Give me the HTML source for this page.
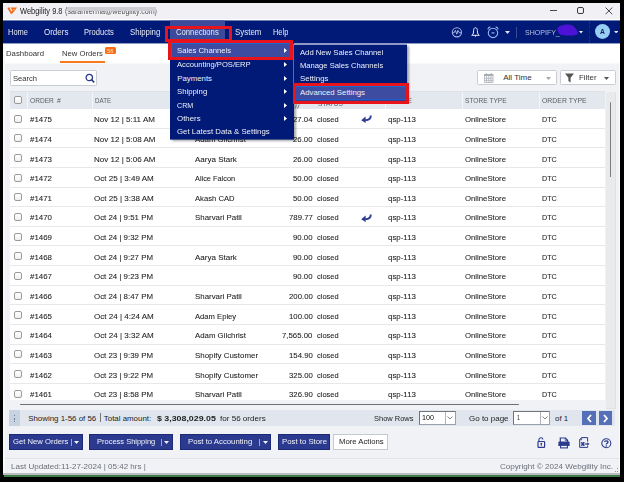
<!DOCTYPE html><html><head><meta charset="utf-8"><style>
*{margin:0;padding:0;box-sizing:border-box}
html,body{width:624px;height:482px;overflow:hidden;background:#000}
body{position:relative;font-family:"Liberation Sans",sans-serif}
div,span,svg{position:absolute}
span{white-space:nowrap;transform-origin:0 50%}
.r{-webkit-text-stroke:0.08px #333}
</style></head><body>
<div style="left:3px;top:3px;width:617px;height:470px;background:#f1f2f5"></div>
<div style="left:3px;top:3px;width:2px;height:470px;background:#f8f8f8"></div>
<div style="left:3px;top:3px;width:617px;height:16px;background:#f0f0f5"></div>
<div style="left:3px;top:19px;width:617px;height:1px;background:#ffffff"></div>
<svg style="left:6.5px;top:6.5px" width="11" height="8" viewBox="0 0 11 8"><path d="M0.3 0.9 L2.1 0.3 L4.9 5.2 L4.1 7.2 Z" fill="#f56a12"/><path d="M4.1 0.4 L10.1 0.4 L4.8 7.2 L3.9 5.3 L5.6 3.2 L3.2 0.4 Z" fill="#f56a12"/><circle cx="6.8" cy="2.6" r="0.7" fill="#f9c9a4"/></svg>
<span style="left:20.00px;top:1.07px;font-size:9px;line-height:20px;color:#1a1a1a;transform:scaleX(0.8277);">Webgility 9.8</span>
<span style="left:65.00px;top:1.07px;font-size:9px;line-height:20px;color:#555;transform:scaleX(0.7930);filter:blur(0.35px);">(sarahverma@webgility.com)</span>
<div style="left:67px;top:6.5px;width:89px;height:4.800000000000001px;background:#cdced3;filter:blur(0.5px)"></div>
<div style="left:549.5px;top:10px;width:7.0px;height:1px;background:#4a4a4a"></div>
<div style="left:577px;top:7px;width:7px;height:7px;border:1px solid #3a3a3a;border-radius:2px"></div>
<svg style="left:605px;top:7px" width="8" height="8" viewBox="0 0 8 8"><path d="M0.6 0.6L7.2 7.2M7.2 0.6L0.6 7.2" stroke="#333" stroke-width="0.9"/></svg>
<div style="left:3px;top:21px;width:617px;height:22px;background:#011a77"></div>
<div style="left:3px;top:20px;width:617px;height:1px;background:rgba(1,26,119,0.55)"></div>
<div style="left:3px;top:43px;width:617px;height:1px;background:rgba(1,26,119,0.4)"></div>
<div style="left:170px;top:21px;width:55px;height:22px;background:#3b4a9b"></div>
<div style="left:170px;top:20px;width:55px;height:1px;background:rgba(59,74,155,0.55)"></div>
<span style="left:7.70px;top:22.94px;font-size:8.2px;line-height:20px;color:#e8ebf5;transform:scaleX(0.9135);">Home</span>
<span style="left:43.60px;top:22.94px;font-size:8.2px;line-height:20px;color:#e8ebf5;transform:scaleX(0.9740);">Orders</span>
<span style="left:83.80px;top:22.94px;font-size:8.2px;line-height:20px;color:#e8ebf5;transform:scaleX(0.9212);">Products</span>
<span style="left:129.50px;top:22.94px;font-size:8.2px;line-height:20px;color:#e8ebf5;transform:scaleX(0.9499);">Shipping</span>
<span style="left:176.20px;top:22.94px;font-size:8.2px;line-height:20px;color:#e8ebf5;transform:scaleX(0.9388);">Connections</span>
<span style="left:234.80px;top:22.94px;font-size:8.2px;line-height:20px;color:#e8ebf5;transform:scaleX(0.9690);">System</span>
<span style="left:272.90px;top:22.94px;font-size:8.2px;line-height:20px;color:#e8ebf5;transform:scaleX(0.9080);">Help</span>
<svg style="left:451px;top:27px" width="12" height="11" viewBox="0 0 12 11"><circle cx="5.9" cy="5.3" r="4.6" fill="none" stroke="#aab4e2" stroke-width="1.1"/><path d="M1.6 5.8 L3 5.8 L4.4 3.4 L5.8 7.2 L6.9 3.4 L8.4 5.8 L10.2 5.8" fill="none" stroke="#aab4e2" stroke-width="1"/></svg>
<svg style="left:470.6px;top:27.4px" width="9" height="10" viewBox="0 0 9 10"><path d="M4.5 0.7 C3.2 0.7 2.7 2 2.6 3.5 L2.4 6 C2.3 7 1.6 7.7 0.7 8.3 L8.3 8.3 C7.4 7.7 6.7 7 6.6 6 L6.4 3.5 C6.3 2 5.8 0.7 4.5 0.7 Z" fill="none" stroke="#e9ecf7" stroke-width="1"/><circle cx="4.5" cy="9" r="0.7" fill="#e9ecf7"/></svg>
<svg style="left:487.4px;top:26.3px" width="12" height="13" viewBox="0 0 12 13"><circle cx="6" cy="6.9" r="4.7" fill="none" stroke="#8fb3ee" stroke-width="1.1"/><path d="M0.8 3.4 Q1.2 1.3 3.3 0.9 M11.2 3.4 Q10.8 1.3 8.7 0.9" fill="none" stroke="#8fb3ee" stroke-width="1.1"/><rect x="4.5" y="6.3" width="3" height="1.2" fill="#8fb3ee"/></svg>
<svg style="left:504.5px;top:31px" width="5" height="3" viewBox="0 0 5 3"><path d="M0 0 L5 0 L2.5 3 Z" fill="#dfe3f3"/></svg>
<div style="left:516px;top:27px;width:1px;height:11px;background:#3a4a96"></div>
<span style="left:525.10px;top:22.53px;font-size:7.8px;line-height:20px;color:#b8c0e0;transform:scaleX(0.9021);">SHOPIFY_</span>
<svg style="left:556px;top:24px" width="23" height="12" viewBox="0 0 23 12"><path d="M1.3 4.8 C2 2.5 4 1.8 6 1.6 C8 0.8 11 0.4 13.5 0.7 C16 0.8 18 2.2 18.8 3.8 C20.5 5.5 22 7.5 22 9.5 C21.5 11 18 11.6 14 11.6 C10 11.8 7 11.5 4.5 10.5 C2.5 9.5 1 7 1.3 4.8 Z" fill="#4d12d6"/></svg>
<svg style="left:579px;top:31px" width="4" height="2.5" viewBox="0 0 4 2.5"><path d="M0 0 L4 0 L2 2.5 Z" fill="#f2f4fb"/></svg>
<div style="left:589px;top:21px;width:1px;height:22px;border-left:1px dashed #2a2877"></div>
<div style="left:594.8px;top:24.3px;width:15.400000000000091px;height:15.2px;background:#98cdf4;border-radius:50%"></div>
<span style="left:600.10px;top:21.72px;font-size:7.6px;line-height:20px;color:#13205a;font-weight:bold;transform:scaleX(0.8955);">A</span>
<svg style="left:613.8px;top:30.6px" width="4.3" height="2.6" viewBox="0 0 5 3"><path d="M0 0 L5 0 L2.5 3 Z" fill="#dfe3f3"/></svg>
<div style="left:5px;top:44px;width:615px;height:19px;background:#ffffff"></div>
<div style="left:5px;top:63px;width:615px;height:1px;background:#f8f9fa"></div>
<span style="left:6.20px;top:44.44px;font-size:8px;line-height:20px;color:#333;transform:scaleX(0.9714);">Dashboard</span>
<span style="left:62.00px;top:44.44px;font-size:8px;line-height:20px;color:#333;transform:scaleX(0.9583);">New Orders</span>
<div style="left:60px;top:61px;width:45px;height:2px;background:#f77a1e"></div>
<div style="left:104.5px;top:46.8px;width:11.299999999999997px;height:7.200000000000003px;background:#fb6d12;border-radius:1.5px"></div>
<span style="left:107.30px;top:40.67px;font-size:5.6px;line-height:20px;color:#fde3d0;transform:scaleX(1.0135);">56</span>
<div style="left:10px;top:70.4px;width:86.5px;height:15.599999999999994px;background:#fff;border:1px solid #c9ccd2;border-radius:1.5px"></div>
<span style="left:12.50px;top:69.04px;font-size:8px;line-height:20px;color:#333;transform:scaleX(0.9464);">Search</span>
<svg style="left:85px;top:73px" width="10" height="11" viewBox="0 0 10 11"><circle cx="4.3" cy="4.5" r="3.2" fill="none" stroke="#273a8f" stroke-width="1.3"/><path d="M6.6 6.8 L9.2 9.4" stroke="#273a8f" stroke-width="1.6"/></svg>
<div style="left:477px;top:70px;width:80px;height:15px;background:#fff;border:1px solid #c9ccd2;border-radius:1.5px"></div>
<svg style="left:483.5px;top:73px" width="10" height="10" viewBox="0 0 10 10"><rect x="0" y="1" width="9.5" height="2" fill="#a9adb4"/><path d="M0.5 3V9.5H9V3M0.5 5.2H9M0.5 7.4H9M2.6 3V9.5M4.75 3V9.5M6.9 3V9.5" fill="none" stroke="#b3b7be" stroke-width="0.9"/><path d="M2.3 0V1.5M7.2 0V1.5" stroke="#a9adb4" stroke-width="1"/></svg>
<span style="left:503.20px;top:68.04px;font-size:8px;line-height:20px;color:#333;">All Time</span>
<svg style="left:545.5px;top:76.5px" width="5" height="3" viewBox="0 0 5 3"><path d="M0 0 L5 0 L2.5 3 Z" fill="#a8a8a8"/></svg>
<div style="left:560px;top:70px;width:56px;height:15px;background:#fff;border:1px solid #c9ccd2;border-radius:1.5px"></div>
<svg style="left:564.5px;top:72.5px" width="10" height="10" viewBox="0 0 10 10"><path d="M0 0.5 L9 0.5 L5.6 4.8 L5.6 9.5 L3.4 8 L3.4 4.8 Z" fill="#555"/></svg>
<span style="left:578.70px;top:68.04px;font-size:8px;line-height:20px;color:#333;transform:scaleX(0.9910);">Filter</span>
<svg style="left:604px;top:76.5px" width="5" height="3" viewBox="0 0 5 3"><path d="M0 0 L5 0 L2.5 3 Z" fill="#555"/></svg>
<div style="left:9.5px;top:91px;width:595.5px;height:18px;background:#e3e8ef;border-top:1px solid #dde2e9"></div>
<div style="left:27px;top:92px;width:1px;height:17px;background:#f4f6fa"></div>
<div style="left:92px;top:92px;width:1px;height:17px;background:#f4f6fa"></div>
<div style="left:385px;top:92px;width:1px;height:17px;background:#f4f6fa"></div>
<div style="left:462px;top:92px;width:1px;height:17px;background:#f4f6fa"></div>
<div style="left:539px;top:92px;width:1px;height:17px;background:#f4f6fa"></div>
<div style="left:14px;top:96px;width:8px;height:8px;background:linear-gradient(#fff,#f0f0f0);border:1px solid #9a9a9a;border-radius:2px"></div>
<span style="left:30.00px;top:90.70px;font-size:6.8px;line-height:20px;color:#555a66;transform:scaleX(0.9695);">ORDER</span>
<span style="left:57.00px;top:90.80px;font-size:6.8px;line-height:20px;color:#555a66;transform:scaleX(1.0069);">#</span>
<span style="left:94.90px;top:90.70px;font-size:6.8px;line-height:20px;color:#555a66;transform:scaleX(0.9124);">DATE</span>
<span style="left:195.00px;top:90.70px;font-size:6.8px;line-height:20px;color:#555a66;transform:scaleX(0.9538);">CUSTOMER</span>
<span style="left:283.00px;top:90.70px;font-size:6.8px;line-height:20px;color:#555a66;transform:scaleX(0.9838);">AMOUNT</span>
<span style="left:318.00px;top:93.70px;font-size:6.8px;line-height:20px;color:#555a66;transform:scaleX(0.9688);">STATUS</span>
<span style="left:389.00px;top:90.70px;font-size:6.8px;line-height:20px;color:#555a66;transform:scaleX(0.9875);">STORE</span>
<span style="left:465.30px;top:90.70px;font-size:6.8px;line-height:20px;color:#555a66;transform:scaleX(0.9734);">STORE TYPE</span>
<span style="left:542.30px;top:90.70px;font-size:6.8px;line-height:20px;color:#555a66;transform:scaleX(1.0137);">ORDER TYPE</span>
<div style="left:9.5px;top:109px;width:595.5px;height:290.5px;background:#fff"></div>
<div style="left:9.5px;top:127.64px;width:595.5px;height:0.9999999999999858px;background:#e6e8ec"></div>
<div style="left:14px;top:115px;width:8px;height:8px;background:linear-gradient(#fff,#f0f0f0);border:1px solid #9a9a9a;border-radius:2px"></div>
<span class=r style="left:30.00px;top:110.24px;font-size:8.1px;line-height:20px;color:#1a1a1a;transform:scaleX(0.9770);">#1475</span>
<span class=r style="left:94.10px;top:110.24px;font-size:8.1px;line-height:20px;color:#1a1a1a;transform:scaleX(0.9935);">Nov 12 | 5:11 AM</span>
<span class=r style="left:195.10px;top:110.24px;font-size:8.1px;line-height:20px;color:#1a1a1a;transform:scaleX(0.9668);">Adam Gilchrist</span>
<span class=r style="left:293.30px;top:110.24px;font-size:8.1px;line-height:20px;color:#1a1a1a;transform:scaleX(0.9610);">27.04</span>
<span class=r style="left:317.30px;top:110.24px;font-size:8.1px;line-height:20px;color:#1a1a1a;transform:scaleX(0.9227);">closed</span>
<svg style="left:360.5px;top:115.40px" width="11" height="8" viewBox="0 0 11 8"><path d="M9.8 0.6 C9.8 4 8 5.3 4.2 5.3" fill="none" stroke="#2a3c95" stroke-width="1.9"/><path d="M0.2 5.2 L4.6 1.6 L4.6 8 Z" fill="#2a3c95"/></svg>
<span class=r style="left:388.00px;top:110.24px;font-size:8.1px;line-height:20px;color:#1a1a1a;transform:scaleX(0.9765);">qsp-113</span>
<span class=r style="left:464.80px;top:110.24px;font-size:8.1px;line-height:20px;color:#1a1a1a;transform:scaleX(0.9587);">OnlineStore</span>
<span class=r style="left:541.90px;top:110.24px;font-size:8.1px;line-height:20px;color:#1a1a1a;transform:scaleX(0.8891);">DTC</span>
<div style="left:9.5px;top:147.28px;width:595.5px;height:1.0px;background:#e6e8ec"></div>
<div style="left:14px;top:134px;width:8px;height:8px;background:linear-gradient(#fff,#f0f0f0);border:1px solid #9a9a9a;border-radius:2px"></div>
<span class=r style="left:30.00px;top:129.88px;font-size:8.1px;line-height:20px;color:#1a1a1a;transform:scaleX(0.9770);">#1474</span>
<span class=r style="left:94.10px;top:129.88px;font-size:8.1px;line-height:20px;color:#1a1a1a;transform:scaleX(0.9935);">Nov 12 | 5:08 AM</span>
<span class=r style="left:195.10px;top:129.88px;font-size:8.1px;line-height:20px;color:#1a1a1a;transform:scaleX(0.9668);">Adam Gilchrist</span>
<span class=r style="left:293.30px;top:129.88px;font-size:8.1px;line-height:20px;color:#1a1a1a;transform:scaleX(0.9610);">26.00</span>
<span class=r style="left:317.30px;top:129.88px;font-size:8.1px;line-height:20px;color:#1a1a1a;transform:scaleX(0.9227);">closed</span>
<span class=r style="left:388.00px;top:129.88px;font-size:8.1px;line-height:20px;color:#1a1a1a;transform:scaleX(0.9765);">qsp-113</span>
<span class=r style="left:464.80px;top:129.88px;font-size:8.1px;line-height:20px;color:#1a1a1a;transform:scaleX(0.9587);">OnlineStore</span>
<span class=r style="left:541.90px;top:129.88px;font-size:8.1px;line-height:20px;color:#1a1a1a;transform:scaleX(0.8891);">DTC</span>
<div style="left:9.5px;top:166.92px;width:595.5px;height:1.0px;background:#e6e8ec"></div>
<div style="left:14px;top:154px;width:8px;height:8px;background:linear-gradient(#fff,#f0f0f0);border:1px solid #9a9a9a;border-radius:2px"></div>
<span class=r style="left:30.00px;top:149.52px;font-size:8.1px;line-height:20px;color:#1a1a1a;transform:scaleX(0.9770);">#1473</span>
<span class=r style="left:94.10px;top:149.52px;font-size:8.1px;line-height:20px;color:#1a1a1a;transform:scaleX(0.9935);">Nov 12 | 5:06 AM</span>
<span class=r style="left:195.10px;top:149.52px;font-size:8.1px;line-height:20px;color:#1a1a1a;transform:scaleX(0.9891);">Aarya Stark</span>
<span class=r style="left:293.30px;top:149.52px;font-size:8.1px;line-height:20px;color:#1a1a1a;transform:scaleX(0.9610);">26.00</span>
<span class=r style="left:317.30px;top:149.52px;font-size:8.1px;line-height:20px;color:#1a1a1a;transform:scaleX(0.9227);">closed</span>
<span class=r style="left:388.00px;top:149.52px;font-size:8.1px;line-height:20px;color:#1a1a1a;transform:scaleX(0.9765);">qsp-113</span>
<span class=r style="left:464.80px;top:149.52px;font-size:8.1px;line-height:20px;color:#1a1a1a;transform:scaleX(0.9587);">OnlineStore</span>
<span class=r style="left:541.90px;top:149.52px;font-size:8.1px;line-height:20px;color:#1a1a1a;transform:scaleX(0.8891);">DTC</span>
<div style="left:9.5px;top:186.56px;width:595.5px;height:1.0px;background:#e6e8ec"></div>
<div style="left:14px;top:174px;width:8px;height:8px;background:linear-gradient(#fff,#f0f0f0);border:1px solid #9a9a9a;border-radius:2px"></div>
<span class=r style="left:30.00px;top:169.16px;font-size:8.1px;line-height:20px;color:#1a1a1a;transform:scaleX(0.9770);">#1472</span>
<span class=r style="left:94.10px;top:169.16px;font-size:8.1px;line-height:20px;color:#1a1a1a;transform:scaleX(0.9935);">Oct 25 | 3:49 AM</span>
<span class=r style="left:195.10px;top:169.16px;font-size:8.1px;line-height:20px;color:#1a1a1a;transform:scaleX(0.9092);">Alice Falcon</span>
<span class=r style="left:293.30px;top:169.16px;font-size:8.1px;line-height:20px;color:#1a1a1a;transform:scaleX(0.9610);">50.00</span>
<span class=r style="left:317.30px;top:169.16px;font-size:8.1px;line-height:20px;color:#1a1a1a;transform:scaleX(0.9227);">closed</span>
<span class=r style="left:388.00px;top:169.16px;font-size:8.1px;line-height:20px;color:#1a1a1a;transform:scaleX(0.9765);">qsp-113</span>
<span class=r style="left:464.80px;top:169.16px;font-size:8.1px;line-height:20px;color:#1a1a1a;transform:scaleX(0.9587);">OnlineStore</span>
<span class=r style="left:541.90px;top:169.16px;font-size:8.1px;line-height:20px;color:#1a1a1a;transform:scaleX(0.8891);">DTC</span>
<div style="left:9.5px;top:206.2px;width:595.5px;height:1.0px;background:#e6e8ec"></div>
<div style="left:14px;top:193px;width:8px;height:8px;background:linear-gradient(#fff,#f0f0f0);border:1px solid #9a9a9a;border-radius:2px"></div>
<span class=r style="left:30.00px;top:188.80px;font-size:8.1px;line-height:20px;color:#1a1a1a;transform:scaleX(0.9770);">#1471</span>
<span class=r style="left:94.10px;top:188.80px;font-size:8.1px;line-height:20px;color:#1a1a1a;transform:scaleX(0.9935);">Oct 25 | 3:38 AM</span>
<span class=r style="left:195.10px;top:188.80px;font-size:8.1px;line-height:20px;color:#1a1a1a;transform:scaleX(0.9456);">Akash CAD</span>
<span class=r style="left:293.30px;top:188.80px;font-size:8.1px;line-height:20px;color:#1a1a1a;transform:scaleX(0.9610);">50.00</span>
<span class=r style="left:317.30px;top:188.80px;font-size:8.1px;line-height:20px;color:#1a1a1a;transform:scaleX(0.9227);">closed</span>
<span class=r style="left:388.00px;top:188.80px;font-size:8.1px;line-height:20px;color:#1a1a1a;transform:scaleX(0.9765);">qsp-113</span>
<span class=r style="left:464.80px;top:188.80px;font-size:8.1px;line-height:20px;color:#1a1a1a;transform:scaleX(0.9587);">OnlineStore</span>
<span class=r style="left:541.90px;top:188.80px;font-size:8.1px;line-height:20px;color:#1a1a1a;transform:scaleX(0.8891);">DTC</span>
<div style="left:9.5px;top:225.84px;width:595.5px;height:1.0px;background:#e6e8ec"></div>
<div style="left:14px;top:213px;width:8px;height:8px;background:linear-gradient(#fff,#f0f0f0);border:1px solid #9a9a9a;border-radius:2px"></div>
<span class=r style="left:30.00px;top:208.44px;font-size:8.1px;line-height:20px;color:#1a1a1a;transform:scaleX(0.9770);">#1470</span>
<span class=r style="left:94.10px;top:208.44px;font-size:8.1px;line-height:20px;color:#1a1a1a;transform:scaleX(0.9731);">Oct 24 | 9:51 PM</span>
<span class=r style="left:195.10px;top:208.44px;font-size:8.1px;line-height:20px;color:#1a1a1a;transform:scaleX(0.9739);">Sharvari Patil</span>
<span class=r style="left:288.98px;top:208.44px;font-size:8.1px;line-height:20px;color:#1a1a1a;transform:scaleX(0.9610);">789.77</span>
<span class=r style="left:317.30px;top:208.44px;font-size:8.1px;line-height:20px;color:#1a1a1a;transform:scaleX(0.9227);">closed</span>
<svg style="left:360.5px;top:213.60px" width="11" height="8" viewBox="0 0 11 8"><path d="M9.8 0.6 C9.8 4 8 5.3 4.2 5.3" fill="none" stroke="#2a3c95" stroke-width="1.9"/><path d="M0.2 5.2 L4.6 1.6 L4.6 8 Z" fill="#2a3c95"/></svg>
<span class=r style="left:388.00px;top:208.44px;font-size:8.1px;line-height:20px;color:#1a1a1a;transform:scaleX(0.9765);">qsp-113</span>
<span class=r style="left:464.80px;top:208.44px;font-size:8.1px;line-height:20px;color:#1a1a1a;transform:scaleX(0.9587);">OnlineStore</span>
<span class=r style="left:541.90px;top:208.44px;font-size:8.1px;line-height:20px;color:#1a1a1a;transform:scaleX(0.8891);">DTC</span>
<div style="left:9.5px;top:245.48px;width:595.5px;height:1.0px;background:#e6e8ec"></div>
<div style="left:14px;top:233px;width:8px;height:8px;background:linear-gradient(#fff,#f0f0f0);border:1px solid #9a9a9a;border-radius:2px"></div>
<span class=r style="left:30.00px;top:228.08px;font-size:8.1px;line-height:20px;color:#1a1a1a;transform:scaleX(0.9770);">#1469</span>
<span class=r style="left:94.10px;top:228.08px;font-size:8.1px;line-height:20px;color:#1a1a1a;transform:scaleX(0.9731);">Oct 24 | 9:32 PM</span>
<span class=r style="left:293.30px;top:228.08px;font-size:8.1px;line-height:20px;color:#1a1a1a;transform:scaleX(0.9610);">90.00</span>
<span class=r style="left:317.30px;top:228.08px;font-size:8.1px;line-height:20px;color:#1a1a1a;transform:scaleX(0.9227);">closed</span>
<span class=r style="left:388.00px;top:228.08px;font-size:8.1px;line-height:20px;color:#1a1a1a;transform:scaleX(0.9765);">qsp-113</span>
<span class=r style="left:464.80px;top:228.08px;font-size:8.1px;line-height:20px;color:#1a1a1a;transform:scaleX(0.9587);">OnlineStore</span>
<span class=r style="left:541.90px;top:228.08px;font-size:8.1px;line-height:20px;color:#1a1a1a;transform:scaleX(0.8891);">DTC</span>
<div style="left:9.5px;top:265.12px;width:595.5px;height:1.0px;background:#e6e8ec"></div>
<div style="left:14px;top:252px;width:8px;height:8px;background:linear-gradient(#fff,#f0f0f0);border:1px solid #9a9a9a;border-radius:2px"></div>
<span class=r style="left:30.00px;top:247.72px;font-size:8.1px;line-height:20px;color:#1a1a1a;transform:scaleX(0.9770);">#1468</span>
<span class=r style="left:94.10px;top:247.72px;font-size:8.1px;line-height:20px;color:#1a1a1a;transform:scaleX(0.9731);">Oct 24 | 9:27 PM</span>
<span class=r style="left:195.10px;top:247.72px;font-size:8.1px;line-height:20px;color:#1a1a1a;transform:scaleX(0.9891);">Aarya Stark</span>
<span class=r style="left:293.30px;top:247.72px;font-size:8.1px;line-height:20px;color:#1a1a1a;transform:scaleX(0.9610);">90.00</span>
<span class=r style="left:317.30px;top:247.72px;font-size:8.1px;line-height:20px;color:#1a1a1a;transform:scaleX(0.9227);">closed</span>
<span class=r style="left:388.00px;top:247.72px;font-size:8.1px;line-height:20px;color:#1a1a1a;transform:scaleX(0.9765);">qsp-113</span>
<span class=r style="left:464.80px;top:247.72px;font-size:8.1px;line-height:20px;color:#1a1a1a;transform:scaleX(0.9587);">OnlineStore</span>
<span class=r style="left:541.90px;top:247.72px;font-size:8.1px;line-height:20px;color:#1a1a1a;transform:scaleX(0.8891);">DTC</span>
<div style="left:9.5px;top:284.76px;width:595.5px;height:1.0px;background:#e6e8ec"></div>
<div style="left:14px;top:272px;width:8px;height:8px;background:linear-gradient(#fff,#f0f0f0);border:1px solid #9a9a9a;border-radius:2px"></div>
<span class=r style="left:30.00px;top:267.36px;font-size:8.1px;line-height:20px;color:#1a1a1a;transform:scaleX(0.9770);">#1467</span>
<span class=r style="left:94.10px;top:267.36px;font-size:8.1px;line-height:20px;color:#1a1a1a;transform:scaleX(0.9731);">Oct 24 | 9:23 PM</span>
<span class=r style="left:293.30px;top:267.36px;font-size:8.1px;line-height:20px;color:#1a1a1a;transform:scaleX(0.9610);">90.00</span>
<span class=r style="left:317.30px;top:267.36px;font-size:8.1px;line-height:20px;color:#1a1a1a;transform:scaleX(0.9227);">closed</span>
<span class=r style="left:388.00px;top:267.36px;font-size:8.1px;line-height:20px;color:#1a1a1a;transform:scaleX(0.9765);">qsp-113</span>
<span class=r style="left:464.80px;top:267.36px;font-size:8.1px;line-height:20px;color:#1a1a1a;transform:scaleX(0.9587);">OnlineStore</span>
<span class=r style="left:541.90px;top:267.36px;font-size:8.1px;line-height:20px;color:#1a1a1a;transform:scaleX(0.8891);">DTC</span>
<div style="left:9.5px;top:304.4px;width:595.5px;height:1.0px;background:#e6e8ec"></div>
<div style="left:14px;top:292px;width:8px;height:8px;background:linear-gradient(#fff,#f0f0f0);border:1px solid #9a9a9a;border-radius:2px"></div>
<span class=r style="left:30.00px;top:287.00px;font-size:8.1px;line-height:20px;color:#1a1a1a;transform:scaleX(0.9770);">#1466</span>
<span class=r style="left:94.10px;top:287.00px;font-size:8.1px;line-height:20px;color:#1a1a1a;transform:scaleX(0.9731);">Oct 24 | 8:47 PM</span>
<span class=r style="left:195.10px;top:287.00px;font-size:8.1px;line-height:20px;color:#1a1a1a;transform:scaleX(0.9739);">Sharvari Patil</span>
<span class=r style="left:288.98px;top:287.00px;font-size:8.1px;line-height:20px;color:#1a1a1a;transform:scaleX(0.9610);">200.00</span>
<span class=r style="left:317.30px;top:287.00px;font-size:8.1px;line-height:20px;color:#1a1a1a;transform:scaleX(0.9227);">closed</span>
<span class=r style="left:388.00px;top:287.00px;font-size:8.1px;line-height:20px;color:#1a1a1a;transform:scaleX(0.9765);">qsp-113</span>
<span class=r style="left:464.80px;top:287.00px;font-size:8.1px;line-height:20px;color:#1a1a1a;transform:scaleX(0.9587);">OnlineStore</span>
<span class=r style="left:541.90px;top:287.00px;font-size:8.1px;line-height:20px;color:#1a1a1a;transform:scaleX(0.8891);">DTC</span>
<div style="left:9.5px;top:324.04px;width:595.5px;height:1.0px;background:#e6e8ec"></div>
<div style="left:14px;top:311px;width:8px;height:8px;background:linear-gradient(#fff,#f0f0f0);border:1px solid #9a9a9a;border-radius:2px"></div>
<span class=r style="left:30.00px;top:306.64px;font-size:8.1px;line-height:20px;color:#1a1a1a;transform:scaleX(0.9770);">#1465</span>
<span class=r style="left:94.10px;top:306.64px;font-size:8.1px;line-height:20px;color:#1a1a1a;transform:scaleX(0.9935);">Oct 24 | 4:24 AM</span>
<span class=r style="left:195.10px;top:306.64px;font-size:8.1px;line-height:20px;color:#1a1a1a;transform:scaleX(0.9437);">Adam Epley</span>
<span class=r style="left:288.98px;top:306.64px;font-size:8.1px;line-height:20px;color:#1a1a1a;transform:scaleX(0.9610);">100.00</span>
<span class=r style="left:317.30px;top:306.64px;font-size:8.1px;line-height:20px;color:#1a1a1a;transform:scaleX(0.9227);">closed</span>
<span class=r style="left:388.00px;top:306.64px;font-size:8.1px;line-height:20px;color:#1a1a1a;transform:scaleX(0.9765);">qsp-113</span>
<span class=r style="left:464.80px;top:306.64px;font-size:8.1px;line-height:20px;color:#1a1a1a;transform:scaleX(0.9587);">OnlineStore</span>
<span class=r style="left:541.90px;top:306.64px;font-size:8.1px;line-height:20px;color:#1a1a1a;transform:scaleX(0.8891);">DTC</span>
<div style="left:9.5px;top:343.68px;width:595.5px;height:1.0px;background:#e6e8ec"></div>
<div style="left:14px;top:331px;width:8px;height:8px;background:linear-gradient(#fff,#f0f0f0);border:1px solid #9a9a9a;border-radius:2px"></div>
<span class=r style="left:30.00px;top:326.28px;font-size:8.1px;line-height:20px;color:#1a1a1a;transform:scaleX(0.9770);">#1464</span>
<span class=r style="left:94.10px;top:326.28px;font-size:8.1px;line-height:20px;color:#1a1a1a;transform:scaleX(0.9935);">Oct 24 | 3:32 AM</span>
<span class=r style="left:195.10px;top:326.28px;font-size:8.1px;line-height:20px;color:#1a1a1a;transform:scaleX(0.9668);">Adam Gilchrist</span>
<span class=r style="left:282.48px;top:326.28px;font-size:8.1px;line-height:20px;color:#1a1a1a;transform:scaleX(0.9610);">7,565.00</span>
<span class=r style="left:317.30px;top:326.28px;font-size:8.1px;line-height:20px;color:#1a1a1a;transform:scaleX(0.9227);">closed</span>
<span class=r style="left:388.00px;top:326.28px;font-size:8.1px;line-height:20px;color:#1a1a1a;transform:scaleX(0.9765);">qsp-113</span>
<span class=r style="left:464.80px;top:326.28px;font-size:8.1px;line-height:20px;color:#1a1a1a;transform:scaleX(0.9587);">OnlineStore</span>
<span class=r style="left:541.90px;top:326.28px;font-size:8.1px;line-height:20px;color:#1a1a1a;transform:scaleX(0.8891);">DTC</span>
<div style="left:9.5px;top:363.32px;width:595.5px;height:1.0px;background:#e6e8ec"></div>
<div style="left:14px;top:350px;width:8px;height:8px;background:linear-gradient(#fff,#f0f0f0);border:1px solid #9a9a9a;border-radius:2px"></div>
<span class=r style="left:30.00px;top:345.92px;font-size:8.1px;line-height:20px;color:#1a1a1a;transform:scaleX(0.9770);">#1463</span>
<span class=r style="left:94.10px;top:345.92px;font-size:8.1px;line-height:20px;color:#1a1a1a;transform:scaleX(0.9731);">Oct 23 | 9:39 PM</span>
<span class=r style="left:195.10px;top:345.92px;font-size:8.1px;line-height:20px;color:#1a1a1a;transform:scaleX(0.9799);">Shopify Customer</span>
<span class=r style="left:288.98px;top:345.92px;font-size:8.1px;line-height:20px;color:#1a1a1a;transform:scaleX(0.9610);">154.90</span>
<span class=r style="left:317.30px;top:345.92px;font-size:8.1px;line-height:20px;color:#1a1a1a;transform:scaleX(0.9227);">closed</span>
<span class=r style="left:388.00px;top:345.92px;font-size:8.1px;line-height:20px;color:#1a1a1a;transform:scaleX(0.9765);">qsp-113</span>
<span class=r style="left:464.80px;top:345.92px;font-size:8.1px;line-height:20px;color:#1a1a1a;transform:scaleX(0.9587);">OnlineStore</span>
<span class=r style="left:541.90px;top:345.92px;font-size:8.1px;line-height:20px;color:#1a1a1a;transform:scaleX(0.8891);">DTC</span>
<div style="left:9.5px;top:382.96px;width:595.5px;height:1.0px;background:#e6e8ec"></div>
<div style="left:14px;top:370px;width:8px;height:8px;background:linear-gradient(#fff,#f0f0f0);border:1px solid #9a9a9a;border-radius:2px"></div>
<span class=r style="left:30.00px;top:365.56px;font-size:8.1px;line-height:20px;color:#1a1a1a;transform:scaleX(0.9770);">#1462</span>
<span class=r style="left:94.10px;top:365.56px;font-size:8.1px;line-height:20px;color:#1a1a1a;transform:scaleX(0.9731);">Oct 23 | 9:22 PM</span>
<span class=r style="left:195.10px;top:365.56px;font-size:8.1px;line-height:20px;color:#1a1a1a;transform:scaleX(0.9799);">Shopify Customer</span>
<span class=r style="left:288.98px;top:365.56px;font-size:8.1px;line-height:20px;color:#1a1a1a;transform:scaleX(0.9610);">325.00</span>
<span class=r style="left:317.30px;top:365.56px;font-size:8.1px;line-height:20px;color:#1a1a1a;transform:scaleX(0.9227);">closed</span>
<span class=r style="left:388.00px;top:365.56px;font-size:8.1px;line-height:20px;color:#1a1a1a;transform:scaleX(0.9765);">qsp-113</span>
<span class=r style="left:464.80px;top:365.56px;font-size:8.1px;line-height:20px;color:#1a1a1a;transform:scaleX(0.9587);">OnlineStore</span>
<span class=r style="left:541.90px;top:365.56px;font-size:8.1px;line-height:20px;color:#1a1a1a;transform:scaleX(0.8891);">DTC</span>
<div style="left:14px;top:390px;width:8px;height:8px;background:linear-gradient(#fff,#f0f0f0);border:1px solid #9a9a9a;border-radius:2px"></div>
<span class=r style="left:30.00px;top:385.20px;font-size:8.1px;line-height:20px;color:#1a1a1a;transform:scaleX(0.9770);">#1461</span>
<span class=r style="left:94.10px;top:385.20px;font-size:8.1px;line-height:20px;color:#1a1a1a;transform:scaleX(0.9731);">Oct 23 | 8:58 PM</span>
<span class=r style="left:195.10px;top:385.20px;font-size:8.1px;line-height:20px;color:#1a1a1a;transform:scaleX(0.9739);">Sharvari Patil</span>
<span class=r style="left:288.98px;top:385.20px;font-size:8.1px;line-height:20px;color:#1a1a1a;transform:scaleX(0.9610);">326.90</span>
<span class=r style="left:317.30px;top:385.20px;font-size:8.1px;line-height:20px;color:#1a1a1a;transform:scaleX(0.9227);">closed</span>
<span class=r style="left:388.00px;top:385.20px;font-size:8.1px;line-height:20px;color:#1a1a1a;transform:scaleX(0.9765);">qsp-113</span>
<span class=r style="left:464.80px;top:385.20px;font-size:8.1px;line-height:20px;color:#1a1a1a;transform:scaleX(0.9587);">OnlineStore</span>
<span class=r style="left:541.90px;top:385.20px;font-size:8.1px;line-height:20px;color:#1a1a1a;transform:scaleX(0.8891);">DTC</span>
<div style="left:605.5px;top:91.5px;width:10.0px;height:317.5px;background:#e9eaec;border-right:1px solid #e0e1e3;border-bottom:1px solid #e0e1e3"></div>
<div style="left:619px;top:63px;width:1px;height:410px;background:#fbfbfb"></div>
<div style="left:610px;top:102px;width:1.2000000000000455px;height:75px;background:#7d7d7d;border-radius:1px"></div>
<div style="left:20px;top:403.8px;width:499px;height:1.1999999999999886px;background:#6f6f6f;border-radius:1px"></div>
<div style="left:9px;top:410px;width:606px;height:16px;background:#e1e6ee"></div>
<div style="left:9px;top:410px;width:10.5px;height:16px;background:#c8d3e2"></div>
<div style="left:13.7px;top:414.5px;width:1.5px;height:1.3999999999999773px;background:#6b7690"></div>
<div style="left:13.7px;top:418.4px;width:1.5px;height:1.3999999999999773px;background:#6b7690"></div>
<div style="left:13.7px;top:420.5px;width:1.5px;height:1.3999999999999773px;background:#6b7690"></div>
<span style="left:28.20px;top:408.63px;font-size:7.9px;line-height:20px;color:#222;">Showing 1-56 of 56</span>
<div style="left:100px;top:413px;width:1px;height:9px;background:#777"></div>
<span style="left:103.80px;top:408.63px;font-size:7.9px;line-height:20px;color:#222;">Total amount:</span>
<span style="left:156.70px;top:408.63px;font-size:7.9px;line-height:20px;color:#222;font-weight:bold;transform:scaleX(1.1170);">$ 3,308,029.05</span>
<span style="left:220.20px;top:408.63px;font-size:7.9px;line-height:20px;color:#222;transform:scaleX(1.0225);">for 56 orders</span>
<span style="left:374.20px;top:408.63px;font-size:7.9px;line-height:20px;color:#222;transform:scaleX(0.9482);">Show Rows</span>
<div style="left:419px;top:411px;width:37px;height:14px;background:#fff;border:1px solid #9aa0aa;border-top-color:#6f737a;border-left-color:#6f737a"></div>
<div style="left:445px;top:412px;width:1px;height:12px;background:#b0b5bd"></div>
<span style="left:422.00px;top:408.43px;font-size:7.9px;line-height:20px;color:#111;transform:scaleX(0.9096);">100</span>
<svg style="left:447.3px;top:416px" width="6" height="4" viewBox="0 0 6 4"><path d="M0.5 0.5 L3 3 L5.5 0.5" fill="none" stroke="#777" stroke-width="0.9"/></svg>
<span style="left:469.40px;top:408.63px;font-size:7.9px;line-height:20px;color:#222;transform:scaleX(1.0127);">Go to page</span>
<div style="left:513px;top:411px;width:37px;height:14px;background:#fff;border:1px solid #9aa0aa;border-top-color:#6f737a;border-left-color:#6f737a"></div>
<div style="left:540px;top:412px;width:1px;height:12px;background:#b0b5bd"></div>
<span style="left:516.70px;top:408.43px;font-size:7.9px;line-height:20px;color:#111;transform:scaleX(0.6386);">1</span>
<svg style="left:542.3px;top:416px" width="6" height="4" viewBox="0 0 6 4"><path d="M0.5 0.5 L3 3 L5.5 0.5" fill="none" stroke="#777" stroke-width="0.9"/></svg>
<span style="left:555.00px;top:408.63px;font-size:7.9px;line-height:20px;color:#222;">of 1</span>
<div style="left:582px;top:411.2px;width:14px;height:13.400000000000034px;background:#5670b8"></div>
<div style="left:599px;top:411.2px;width:13px;height:13.400000000000034px;background:#5670b8"></div>
<svg style="left:585.5px;top:413.5px" width="7" height="9" viewBox="0 0 7 9"><path d="M5 1 L2 4.5 L5 8" fill="none" stroke="#fff" stroke-width="1.8"/></svg>
<svg style="left:602px;top:413.5px" width="7" height="9" viewBox="0 0 7 9"><path d="M2 1 L5 4.5 L2 8" fill="none" stroke="#fff" stroke-width="1.8"/></svg>
<div style="left:9.2px;top:433.5px;width:73.8px;height:16.5px;background:#2b3a8e;border:1px solid #1d2a78"></div>
<span style="left:13.00px;top:432.14px;font-size:8px;line-height:20px;color:#f2f4fa;transform:scaleX(0.9585);">Get New Orders</span>
<div style="left:70.7px;top:438.5px;width:1.0px;height:7.0px;background:#9aa3d4"></div>
<svg style="left:73.9px;top:440.8px" width="5" height="3" viewBox="0 0 5 3"><path d="M0 0 L5 0 L2.5 3 Z" fill="#f2f4fa"/></svg>
<div style="left:89.4px;top:433.5px;width:83.6px;height:16.5px;background:#2b3a8e;border:1px solid #1d2a78"></div>
<span style="left:96.60px;top:432.14px;font-size:8px;line-height:20px;color:#f2f4fa;transform:scaleX(0.9361);">Process Shipping</span>
<div style="left:160.7px;top:438.5px;width:1.0px;height:7.0px;background:#9aa3d4"></div>
<svg style="left:164.2px;top:440.8px" width="5" height="3" viewBox="0 0 5 3"><path d="M0 0 L5 0 L2.5 3 Z" fill="#f2f4fa"/></svg>
<div style="left:180px;top:433.5px;width:91.39999999999998px;height:16.5px;background:#2b3a8e;border:1px solid #1d2a78"></div>
<span style="left:188.40px;top:432.14px;font-size:8px;line-height:20px;color:#f2f4fa;transform:scaleX(0.9686);">Post to Accounting</span>
<div style="left:259.2px;top:438.5px;width:1.0px;height:7.0px;background:#9aa3d4"></div>
<svg style="left:262.6px;top:440.8px" width="5" height="3" viewBox="0 0 5 3"><path d="M0 0 L5 0 L2.5 3 Z" fill="#f2f4fa"/></svg>
<div style="left:278px;top:433.5px;width:51.60000000000002px;height:16.5px;background:#2b3a8e;border:1px solid #1d2a78"></div>
<span style="left:282.40px;top:432.14px;font-size:8px;line-height:20px;color:#f2f4fa;transform:scaleX(0.9732);">Post to Store</span>
<div style="left:333px;top:433.5px;width:55px;height:16.5px;background:#fff;border:1px solid #c6c9cf"></div>
<span style="left:338.60px;top:432.14px;font-size:8px;line-height:20px;color:#222;transform:scaleX(0.9667);">More Actions</span>
<svg style="left:537.3px;top:437px" width="9" height="11" viewBox="0 0 9 11"><path d="M1.9 4.3 L1.9 2.7 C1.9 0.2 5.7 0.2 5.9 2.5" fill="none" stroke="#2b3a8e" stroke-width="1.1"/><rect x="1" y="4.5" width="6.6" height="5.8" rx="0.6" fill="none" stroke="#2b3a8e" stroke-width="1.2"/><circle cx="4.3" cy="6.6" r="0.9" fill="#2b3a8e"/><path d="M3.9 6.8 L4.7 6.8 L4.9 8.8 L3.7 8.8 Z" fill="#2b3a8e"/></svg>
<svg style="left:557.5px;top:436.6px" width="12" height="12" viewBox="0 0 12 12"><path d="M2.3 5 L2.3 1 L7.4 1 L9.6 3.2 L9.6 5" fill="#f4f5fb" stroke="#2b3a8e" stroke-width="1.2"/><path d="M7.2 1 L7.2 3.4 L9.6 3.4" fill="none" stroke="#2b3a8e" stroke-width="0.8"/><path d="M0.4 5.6 Q0.4 4.6 1.4 4.6 L10.6 4.6 Q11.6 4.6 11.6 5.6 L11.6 9.1 L0.4 9.1 Z" fill="#2b3a8e"/><rect x="2.6" y="8.3" width="6.8" height="2.6" fill="#f4f5fb" stroke="#2b3a8e" stroke-width="1.1"/></svg>
<svg style="left:579px;top:437px" width="11" height="11" viewBox="0 0 11 11"><path d="M8.6 4.6 L8.6 0.6 L2.6 0.6 L0.7 2.6 L0.7 10.4 L8.6 10.4 L8.6 8.8" fill="none" stroke="#2b3a8e" stroke-width="1"/><path d="M0.7 2.7 L2.7 2.7 L2.7 0.6" fill="none" stroke="#2b3a8e" stroke-width="0.8"/><path d="M2.3 5.3 L5.3 8.7 M5.3 5.3 L2.3 8.7" stroke="#2b3a8e" stroke-width="1.5"/><path d="M5.8 7 L8.6 7" stroke="#2b3a8e" stroke-width="1.2"/><path d="M8.2 5.2 L10.5 7 L8.2 8.8 Z" fill="#2b3a8e"/></svg>
<svg style="left:601px;top:437.5px" width="11" height="11" viewBox="0 0 11 11"><circle cx="5.3" cy="5.2" r="4.5" fill="none" stroke="#2b3a8e" stroke-width="1.1"/><path d="M3.6 4.1 C3.6 2.4 7 2.4 7 4.1 C7 5.3 5.3 5.2 5.3 6.5" fill="none" stroke="#2b3a8e" stroke-width="1.3"/><circle cx="5.3" cy="8" r="0.8" fill="#2b3a8e"/></svg>
<div style="left:5px;top:457.5px;width:615px;height:1.0px;background:#e2e4e8"></div>
<span style="left:10.70px;top:457.03px;font-size:7.9px;line-height:20px;color:#6b6f7a;transform:scaleX(1.0178);">Last Updated:11-27-2024 | 05:42 hrs |</span>
<span style="left:500.00px;top:457.03px;font-size:7.9px;line-height:20px;color:#6b6f7a;transform:scaleX(1.0231);">Copyright © 2024 Webgility Inc.</span>
<div style="left:617px;top:468px;width:1px;height:1px;background:#999"></div>
<div style="left:615px;top:470.5px;width:1px;height:1.0px;background:#999"></div>
<div style="left:617px;top:470.5px;width:1px;height:1.0px;background:#999"></div>
<div style="left:3px;top:473px;width:617px;height:2px;background:#b9bcc0"></div>
<div style="left:4px;top:475px;width:616px;height:2px;background:#3f7d48"></div>
<div style="left:172px;top:45px;width:124px;height:96px;background:rgba(0,0,0,0.35);filter:blur(1px)"></div>
<div style="left:170px;top:43px;width:124px;height:96px;background:#011a77"></div>
<div style="left:170px;top:139px;width:124px;height:1px;background:rgba(1,26,119,0.6)"></div>
<div style="left:171px;top:43px;width:119.5px;height:14.5px;background:#3d4ba0;border-top:1px solid #1f66d6;border-left:1px solid #1f66d6"></div>
<span style="left:177.30px;top:41.33px;font-size:7.8px;line-height:20px;color:#eef0f8;transform:scaleX(0.9920);">Sales Channels</span>
<svg style="left:283.8px;top:48.40px" width="3" height="5" viewBox="0 0 3 5"><path d="M0 0 L3 2.5 L0 5 Z" fill="#fff"/></svg>
<span style="left:177.30px;top:55.03px;font-size:7.8px;line-height:20px;color:#eef0f8;transform:scaleX(0.9771);">Accounting/POS/ERP</span>
<svg style="left:283.8px;top:62.10px" width="3" height="5" viewBox="0 0 3 5"><path d="M0 0 L3 2.5 L0 5 Z" fill="#fff"/></svg>
<span style="left:177.30px;top:68.53px;font-size:7.8px;line-height:20px;color:#eef0f8;">Payments</span>
<svg style="left:283.8px;top:75.60px" width="3" height="5" viewBox="0 0 3 5"><path d="M0 0 L3 2.5 L0 5 Z" fill="#fff"/></svg>
<span style="left:177.30px;top:82.03px;font-size:7.8px;line-height:20px;color:#eef0f8;transform:scaleX(0.9953);">Shipping</span>
<svg style="left:283.8px;top:89.10px" width="3" height="5" viewBox="0 0 3 5"><path d="M0 0 L3 2.5 L0 5 Z" fill="#fff"/></svg>
<span style="left:177.30px;top:95.53px;font-size:7.8px;line-height:20px;color:#eef0f8;transform:scaleX(0.9129);">CRM</span>
<svg style="left:283.8px;top:102.60px" width="3" height="5" viewBox="0 0 3 5"><path d="M0 0 L3 2.5 L0 5 Z" fill="#fff"/></svg>
<span style="left:177.30px;top:109.03px;font-size:7.8px;line-height:20px;color:#eef0f8;transform:scaleX(1.0128);">Others</span>
<svg style="left:283.8px;top:116.10px" width="3" height="5" viewBox="0 0 3 5"><path d="M0 0 L3 2.5 L0 5 Z" fill="#fff"/></svg>
<span style="left:177.30px;top:122.33px;font-size:7.8px;line-height:20px;color:#eef0f8;transform:scaleX(1.0038);">Get Latest Data &amp; Settings</span>
<div style="left:295.3px;top:46px;width:114.19999999999999px;height:56px;background:rgba(0,0,0,0.35);filter:blur(1px)"></div>
<div style="left:293.3px;top:43.6px;width:114.19999999999999px;height:56.4px;background:#011a77;border-top:1px solid #8e98c8;border-left:1px solid #5a68b0"></div>
<div style="left:296px;top:86px;width:110px;height:14px;background:#3d4ba0;border-top:1px solid #1f66d6;border-bottom:1px solid #1f5ec8"></div>
<div style="left:296px;top:100px;width:110px;height:1px;background:#34408f"></div>
<span style="left:300.00px;top:42.83px;font-size:7.8px;line-height:20px;color:#eef0f8;transform:scaleX(0.9852);">Add New Sales Channel</span>
<span style="left:300.00px;top:55.93px;font-size:7.8px;line-height:20px;color:#eef0f8;transform:scaleX(0.9802);">Manage Sales Channels</span>
<span style="left:300.00px;top:69.23px;font-size:7.8px;line-height:20px;color:#eef0f8;transform:scaleX(1.0107);">Settings</span>
<span style="left:300.00px;top:83.03px;font-size:7.8px;line-height:20px;color:#eef0f8;">Advanced Settings</span>
<svg style="left:293.5px;top:103.5px" width="7" height="5" viewBox="0 0 7 5"><path d="M1 4.5 L2.6 0.5 M3.6 4.5 L5.2 0.5" stroke="#6a6e78" stroke-width="0.9"/></svg>
<div style="left:165px;top:26px;width:67px;height:16px;border:3px solid #e8141c"></div>
<div style="left:168px;top:40px;width:125px;height:20px;border:3px solid #e8141c"></div>
<div style="left:293px;top:83px;width:116px;height:21px;border:3px solid #e8141c"></div>
</body></html>
